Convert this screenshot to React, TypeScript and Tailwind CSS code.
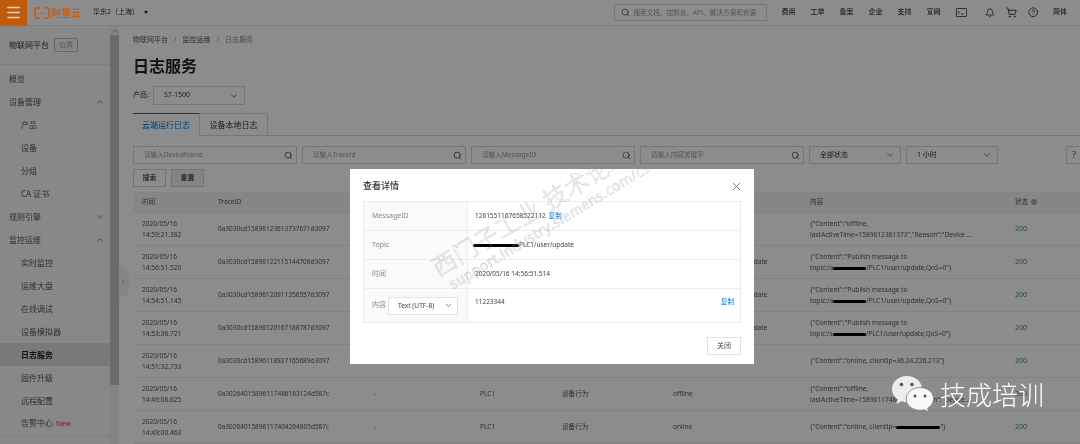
import { Bell, ChevronDown, ChevronLeft, ChevronUp, CircleHelp, Menu, Search, ShoppingCart, X } from "lucide-react";
import type { ReactNode } from "react";

const navItems = ["费用", "工单", "备案", "企业", "支持", "宣网"];

const sideItems: { label: string; sub?: boolean; arrow?: "up" | "down"; active?: boolean; isNew?: boolean }[] = [
  { label: "概览" },
  { label: "设备管理", arrow: "up" },
  { label: "产品", sub: true },
  { label: "设备", sub: true },
  { label: "分组", sub: true },
  { label: "CA 证书", sub: true },
  { label: "规则引擎", arrow: "down" },
  { label: "监控运维", arrow: "up" },
  { label: "实时监控", sub: true },
  { label: "运维大盘", sub: true },
  { label: "在线调试", sub: true },
  { label: "设备模拟器", sub: true },
  { label: "日志服务", sub: true, active: true },
  { label: "固件升级", sub: true },
  { label: "远程配置", sub: true },
  { label: "告警中心", sub: true, isNew: true },
];

function Redact({ w }: { w: number }) {
  return <span className="inline-block h-[3px] bg-black rounded-full align-middle" style={{ width: w }} />;
}

const publishTo = (w: number, prefix: string) => (
  <>
    {'{"Content":"Publish message to'}
    <br />
    topic:/{prefix}
    <Redact w={w} />
    /PLC1/user/update,QoS=0"{"}"}
  </>
);

const topic = "/a1b2c3d4e/PLC1/user/update";

const rows: { date: string; time: string; trace: string; type: string; value: string; content: ReactNode }[] = [
  {
    date: "2020/05/16", time: "14:59:21.382", trace: "0a3030cd15896123613737671d3097", type: "设备行为", value: "offline",
    content: <>{'{"Content":"offline,'}<br />lastActiveTime=1589612361373","Reason":"Device ...</>,
  },
  {
    date: "2020/05/16", time: "14:56:51.520", trace: "0a3030cd15896122115144708d3097", type: "上行消息", value: topic,
    content: publishTo(33, "a"),
  },
  {
    date: "2020/05/16", time: "14:54:51.145", trace: "0a3030cd15896120911356557d3097", type: "上行消息", value: topic,
    content: publishTo(33, "a"),
  },
  {
    date: "2020/05/16", time: "14:53:36.721", trace: "0a3030cd15896120167188787d3097", type: "上行消息", value: topic,
    content: publishTo(33, "s"),
  },
  {
    date: "2020/05/16", time: "14:51:32.733", trace: "0a3030cd15896118927165689d3097", type: "设备行为", value: "online",
    content: '{"Content":"online, clientIp=36.24.226.213"}',
  },
  {
    date: "2020/05/16", time: "14:49:08.625", trace: "0a30264015896117486163124d587c", type: "设备行为", value: "offline",
    content: <>{'{"Content":"offline,'}<br />lastActiveTime=1589611748613","Reason":"Device ...</>,
  },
  {
    date: "2020/05/16", time: "14:49:00.463", trace: "0a30264015896117404264805d587c", type: "设备行为", value: "online",
    content: <>{'{"Content":"online, clientIp='}<Redact w={44} />{'"}'}</>,
  },
];

function FilterInput({ placeholder, className }: { placeholder: string; className: string }) {
  return (
    <div className={`h-[18px] shrink-0 border border-[#d8d8d8] flex items-center justify-between pl-[10px] pr-[3px] ${className}`}>
      <span className="text-[6.6px] text-[#999]">{placeholder}</span>
      <Search size={9} className="text-[#333]" />
    </div>
  );
}

function FilterSelect({ label, className }: { label: string; className: string }) {
  return (
    <div className={`h-[18px] shrink-0 border border-[#d8d8d8] flex items-center justify-between pl-[10px] pr-[3px] ${className}`}>
      <span className="text-[7px] text-[#333]">{label}</span>
      <ChevronDown size={10} className="text-[#666] mr-[2px]" />
    </div>
  );
}

function DetailRow({ label, children, className }: { label: ReactNode; children: ReactNode; className: string }) {
  return (
    <div className={`flex border-b border-[#ececec] last:border-b-0 ${className}`}>
      <div className="w-[104px] shrink-0 bg-[#fafafa] border-r border-[#ececec] pl-[8px] flex items-center text-[7px] text-[#888]">{label}</div>
      {children}
    </div>
  );
}

export default function App() {
  return (
    <div className="relative w-[1080px] h-[444px] overflow-hidden bg-white font-['Noto_Sans','Noto_Sans_CJK_SC',sans-serif] text-[#333] blur-[0.5px]">
      <header className="h-[26px] border-b border-[#e4e4e4] flex items-center">
        <div className="relative z-20 w-[27px] h-[26px] bg-[#c05a0c] flex items-center justify-center">
          <Menu size={17} className="text-[#e8d5c4]" />
        </div>
        <div className="relative z-20 ml-[7px] flex items-center gap-[1px]">
          <svg width="16" height="12" viewBox="0 0 16 12" fill="none" stroke="#c0611f" strokeWidth="1.8">
            <path d="M5.5 1H2.5C1.6 1 1 1.6 1 2.5V9.5C1 10.4 1.6 11 2.5 11H5.5" />
            <path d="M10.5 1H13.5C14.4 1 15 1.6 15 2.5V9.5C15 10.4 14.4 11 13.5 11H10.5" />
            <path d="M5.5 6H10.5" strokeWidth="1.2" />
          </svg>
          <span className="text-[10px] leading-none font-bold text-[#c0611f]">阿里云</span>
        </div>
        <span className="ml-[12px] text-[7px] text-[#333]">华东2（上海）</span>
        <span className="ml-[5px] w-0 h-0 border-x-[2.5px] border-x-transparent border-t-[3px] border-t-[#222]" />
        <div className="ml-auto mr-[13px] flex items-center">
          <div className="w-[153px] h-[17px] border border-[#d8d8d8] flex items-center pl-[6px] gap-[4px] mr-[15px]">
            <Search size={9} className="text-[#555]" />
            <span className="text-[6.6px] text-[#999] whitespace-nowrap">搜索文档、控制台、API、解决方案和资源</span>
          </div>
          <div className="flex items-center gap-[15px]">
            {navItems.map((n) => (
              <span key={n} className="text-[7px] font-medium text-[#333] w-[14px] whitespace-nowrap">{n}</span>
            ))}
          </div>
          <div className="flex items-center ml-[15px] gap-[11px]">
            <svg width="11" height="9" viewBox="0 0 11 9" fill="none" stroke="#333" strokeWidth="0.8">
              <rect x="0.5" y="0.5" width="10" height="8" rx="0.5" />
              <path d="M2 3L3.5 4.5L2 6M5 6H8" />
            </svg>
            <Bell size={10} className="text-[#333] ml-[7px]" />
            <ShoppingCart size={11} className="text-[#333]" />
            <CircleHelp size={10.5} className="text-[#333]" />
          </div>
          <span className="ml-[15px] text-[7px] font-medium text-[#333]">简体</span>
        </div>
      </header>

      <div className="flex h-[418px]">
        <aside className="w-[110px] shrink-0 bg-[#f7f7f7]">
          <div className="h-[40px] pb-[2px] flex items-center pl-[9px] gap-[5px]">
            <span className="text-[8px]">物联网平台</span>
            <span className="border border-[#bbb] rounded-[1px] px-[4px] text-[7px] leading-[12px] text-[#888]">公共</span>
          </div>
          <div className="border-t border-[#e6e6e6] -mt-[2px] pt-[2px] border-b">
            {sideItems.map((it) => (
              <div
                key={it.label}
                className={`h-[23px] flex items-center justify-between pr-[5px] text-[8px] ${it.sub ? "pl-[21px]" : "pl-[9px]"} ${it.active ? "bg-[#dcdcdc] font-bold text-[#222]" : "text-[#555]"}`}
              >
                <span>
                  {it.label}
                  {it.isNew && <span className="ml-[3px] text-[7px] text-[#f0304a]">New</span>}
                </span>
                {it.arrow === "up" && <ChevronUp size={10} className="text-[#777]" />}
                {it.arrow === "down" && <ChevronDown size={10} className="text-[#777]" />}
              </div>
            ))}
          </div>
        </aside>

        <div className="w-[9px] shrink-0 bg-[#f1f1f1] flex flex-col items-center">
          <ChevronUp size={8} className="mt-[1px] text-[#888]" />
          <div className="w-full h-[350px] bg-[#c4c4c4]" />
        </div>

        <main className="flex-1 min-w-0 pl-[14px]">
          <div className="mt-[8px] h-[12px] flex items-center text-[7px] text-[#555]">
            <span>物联网平台</span>
            <span className="mx-[6px] text-[#aaa]">/</span>
            <span>监控运维</span>
            <span className="mx-[6px] text-[#aaa]">/</span>
            <span className="text-[#888]">日志服务</span>
          </div>
          <h1 className="mt-[12px] text-[16px] leading-[16px] font-bold text-[#222]">日志服务</h1>
          <div className="mt-[12px] flex items-center">
            <span className="text-[7px] w-[20px] whitespace-nowrap">产品：</span>
            <div className="w-[92px] h-[19px] border border-[#d8d8d8] flex items-center justify-between pl-[10px] pr-[3px]">
              <span className="text-[7px] text-[#333]">S7-1500</span>
              <ChevronDown size={10} className="text-[#555] mr-[2px]" />
            </div>
          </div>
          <div className="mt-[8px] flex h-[23px] border-b border-[#d8d8d8]">
            <div className="w-[67px] h-[23px] border-t border-t-[#0070cc] border-r border-[#d8d8d8] bg-white flex items-center justify-center text-[8px] text-[#0070cc]">云端运行日志</div>
            <div className="w-[68px] h-[22px] border-t border-r border-[#d8d8d8] flex items-center justify-center text-[8px] text-[#333]">设备本地日志</div>
          </div>
          <div className="mt-[10px] flex items-center gap-[5px]">
            <FilterInput placeholder="请输入DeviceName" className="w-[164px]" />
            <FilterInput placeholder="请输入TraceId" className="w-[164px]" />
            <FilterInput placeholder="请输入MessageID" className="w-[164px]" />
            <FilterInput placeholder="请输入内容关键字" className="w-[164px]" />
            <FilterSelect label="全部状态" className="w-[92px]" />
            <FilterSelect label="1 小时" className="w-[92px]" />
            <div className="ml-[63px] w-[20px] h-[18px] border border-[#d8d8d8] shrink-0 pl-[5px] text-[9px] leading-[16px] text-[#555]">?</div>
          </div>
          <div className="mt-[5px] flex gap-[5px]">
            <div className="w-[33px] h-[18px] border border-[#d0d0d0] flex items-center justify-center text-[7px] font-medium">搜索</div>
            <div className="w-[33px] h-[18px] border border-[#d0d0d0] bg-[#f0f0f0] flex items-center justify-center text-[7px] font-medium">重置</div>
          </div>

          <div className="mt-[5px] text-[6.6px] text-[#555] whitespace-nowrap">
            <div className="h-[21px] flex items-center bg-[#f4f4f4] border-b border-[#ececec]">
              <span className="w-[85px] pl-[9px]">时间</span>
              <span className="w-[592px]">TraceID</span>
              <span className="w-[205px]">内容</span>
              <span className="flex items-center gap-[3px]">
                状态
                <span className="w-[6px] h-[6px] rounded-full bg-[#aaa]" />
              </span>
            </div>
            {rows.map((r) => (
              <div key={r.time} className="h-[33px] flex items-center border-b border-[#ececec] leading-[11.5px]">
                <div className="w-[85px] pl-[9px]">
                  {r.date}
                  <br />
                  {r.time}
                </div>
                <div className="w-[156px] text-[6.5px]">{r.trace}</div>
                <div className="w-[106px]">-</div>
                <div className="w-[82px]">PLC1</div>
                <div className="w-[111px]">{r.type}</div>
                <div className="w-[137px]">{r.value}</div>
                <div className="w-[205px]">{r.content}</div>
                <div className="text-[#2e9e4f] text-[7px]">200</div>
              </div>
            ))}
          </div>
        </main>
      </div>

      <div className="absolute left-[119px] top-[264px] w-[10px] h-[34px] bg-[#f2f2f2] [clip-path:polygon(0_0,100%_15%,100%_85%,0_100%)] flex items-center">
        <ChevronLeft size={9} className="text-[#999]" />
      </div>

      <div className="absolute inset-0 z-10 bg-black/45" />

      <div className="absolute z-20 left-[350px] top-[169px] w-[404px] h-[195px] bg-white px-[13px] flex flex-col">
        <div className="h-[32px] pt-[2px] flex items-center justify-between">
          <span className="text-[9px] font-medium text-[#333]">查看详情</span>
          <X size={13} strokeWidth={1.5} className="text-[#666] mr-[-2px]" />
        </div>
        <div className="border border-[#ececec] text-[7px] text-[#444]">
          <DetailRow label="MessageID" className="h-[29px]">
            <div className="pl-[7px] flex items-center text-[6.5px]">
              1261551167658522112
              <span className="ml-[3px] text-[#0070cc]">复制</span>
            </div>
          </DetailRow>
          <DetailRow label="Topic" className="h-[29px]">
            <div className="pl-[5px] flex items-center text-[6.5px]">
              <Redact w={46} />
              PLC1/user/update
            </div>
          </DetailRow>
          <DetailRow label="时间" className="h-[29px]">
            <div className="pl-[7px] flex items-center text-[6.5px]">2020/05/16 14:56:51.514</div>
          </DetailRow>
          <DetailRow
            label={
              <span className="flex items-center gap-[2px]">
                内容
                <span className="w-[70px] h-[18px] border border-[#e2e2e2] bg-white flex items-center justify-between pl-[9px] pr-[4px] text-[6.6px] text-[#444]">
                  Text (UTF-8)
                  <ChevronDown size={9} className="text-[#555]" />
                </span>
              </span>
            }
            className="h-[33px]"
          >
            <div className="flex-1 pl-[7px] pr-[6px] pt-[8px] flex justify-between text-[6.5px]">
              <span>11223344</span>
              <span className="text-[#0070cc]">复制</span>
            </div>
          </DetailRow>
        </div>
        <div className="mt-[14px] flex justify-end">
          <div className="w-[34px] h-[18px] border border-[#e2e2e2] flex items-center justify-center text-[7px] text-[#444]">关闭</div>
        </div>
      </div>

      <div className="absolute z-30 left-[420px] top-[190px] w-[250px] -rotate-[31deg] text-transparent [-webkit-text-stroke:0.4px_rgba(150,150,150,0.6)] whitespace-nowrap pointer-events-none">
        <div className="text-[24px] leading-[28px] tracking-[0.5px] font-light">西门子工业 技术论坛</div>
        <div className="text-[14px] leading-[15px] tracking-[0.4px] pl-[6px]">support.industry.siemens.com/cs</div>
      </div>

      <div className="absolute z-30 left-[892px] top-[376px] flex items-center pointer-events-none">
        <svg width="42" height="37" viewBox="0 0 42 37">
          <path d="M15 0C6.7 0 0 5.9 0 13.2C0 17.4 2.2 21 5.7 23.4L4.4 28L9.6 25.3C11.3 25.9 13.1 26.3 15 26.3C23.3 26.3 30 20.4 30 13.2C30 5.9 23.3 0 15 0Z" fill="#ececec" />
          <path d="M28 11.5C20.3 11.5 14.2 16.6 14.2 22.9C14.2 29.2 20.3 34.3 28 34.3C29.5 34.3 30.9 34.1 32.2 33.7L36.6 36L35.6 32.2C38.9 30.1 41.6 26.8 41.6 22.9C41.6 16.6 35.6 11.5 28 11.5Z" fill="#f7f7f7" stroke="#777" strokeWidth="0.8" />
          <circle cx="9.5" cy="8.5" r="1.8" fill="#555" />
          <circle cx="20" cy="8.5" r="1.8" fill="#555" />
          <circle cx="23" cy="20" r="1.5" fill="#555" />
          <circle cx="33" cy="20" r="1.5" fill="#555" />
        </svg>
        <span className="ml-[6px] text-[26px] leading-[30px] font-light text-white whitespace-nowrap">技成培训</span>
      </div>
    </div>
  );
}
